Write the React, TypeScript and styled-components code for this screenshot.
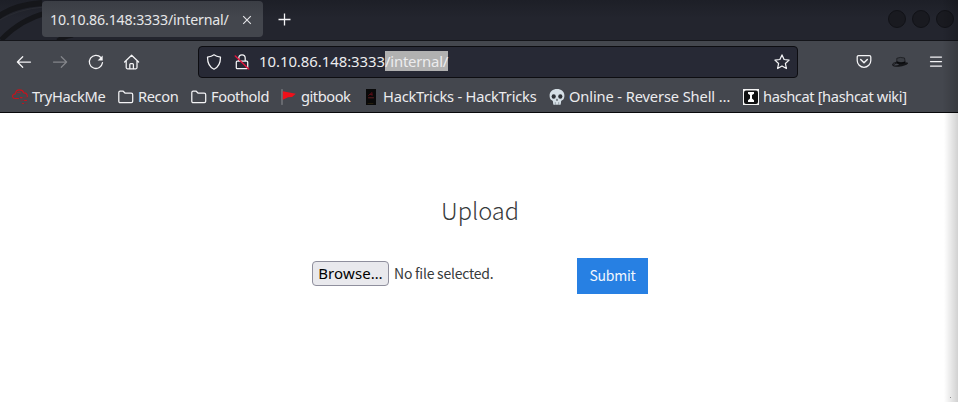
import React from "react";
import styled, { createGlobalStyle } from "styled-components";

const Global = createGlobalStyle`
  * { box-sizing: border-box; }
  body { margin: 0; background: #fff; overflow: hidden; }
`;

const Window = styled.div`
  position: relative;
  width: 958px;
  height: 402px;
  overflow: hidden;
  display: flex;
  flex-direction: column;
  background: #fff;
  font: 14.67px/20px "Noto Sans", sans-serif;
  color: #ececee;
  white-space: nowrap;
`;

const EdgeShade = styled.div<{ $dark?: boolean }>`
  position: absolute;
  right: 0;
  top: ${(p) => (p.$dark ? 0 : 113)}px;
  width: ${(p) => (p.$dark ? 16 : 14)}px;
  height: ${(p) => (p.$dark ? 113 : 289)}px;
  background: linear-gradient(90deg, transparent, rgba(0, 0, 0, 0.18));
`;

const GripDot = styled.div`
  position: absolute;
  left: 950px;
  top: 397px;
  width: 1px;
  height: 1px;
  background: #8a8a8a;
`;

const TabStrip = styled.header`
  position: relative;
  flex: none;
  height: 41px;
  display: flex;
  align-items: flex-start;
  padding: 1px 4px 0 42px;
  background: linear-gradient(#1d1f27, #23252e 45%);
  border-bottom: 1px solid #14151a;
`;

const Wallpaper = styled.svg`
  position: absolute;
  left: 0;
  top: 0;
`;

const Tab = styled.div`
  position: relative;
  width: 221px;
  height: 36px;
  display: flex;
  align-items: center;
  justify-content: space-between;
  padding: 1px 11px 0 8px;
  border-radius: 4px;
  background: linear-gradient(#3b3e45, #43464d 45%);
`;

const TabTitle = styled.span`
  font-size: 14.2px;
  letter-spacing: -0.16px;
  color: #e6e6e8;
`;

const NewTab = styled.div`
  display: flex;
  margin: 12px 0 0 15px;
`;

const WindowButtons = styled.div`
  display: flex;
  gap: 6px;
  margin: 9px 0 0 auto;
`;

const WindowButton = styled.i`
  width: 18px;
  height: 18px;
  border-radius: 50%;
  background: #191a20;
  border: 1px solid #111217;
`;

const NavBar = styled.nav`
  flex: none;
  height: 40px;
  display: flex;
  align-items: center;
  padding: 1px 14px 0 16px;
  background: #44474e;
`;

const NavButtons = styled.div`
  width: 182px;
  display: flex;
  gap: 20px;
`;

const AddressBar = styled.div`
  width: 600px;
  height: 32px;
  display: flex;
  align-items: center;
  padding: 0 7px;
  border: 1px solid #0d0d11;
  border-radius: 4px;
  background: #272935;
`;

const SecurityIcons = styled.div`
  display: flex;
  gap: 12px;
  width: 53px;
`;

const Url = styled.span`
  flex: 1;
  display: flex;
  margin-top: -2px;
  font-size: 14.9px;
  letter-spacing: -0.04px;
`;

const Selection = styled.span`
  background: #b1b1b1;
  letter-spacing: -0.24px;
`;

const Tools = styled.div`
  display: flex;
  gap: 20px;
  margin-left: auto;
`;

const Bookmarks = styled.div`
  flex: none;
  height: 32px;
  display: flex;
  padding: 5px 0 0 12px;
  background: #44474e;
  border-bottom: 1px solid #08080b;
`;

const Bookmark = styled.div<{ $w: number; $tracking: number }>`
  flex: none;
  width: ${(p) => p.$w}px;
  display: flex;
  gap: 4px;
  letter-spacing: ${(p) => p.$tracking}px;
  svg { flex: none; margin-top: 3px; }
`;

const Page = styled.main`
  display: flex;
  flex-direction: column;
  align-items: center;
  padding-top: 77px;
  font-family: "Noto Sans CJK JP", sans-serif;
  color: #373a3c;
`;

const Title = styled.h1`
  margin: 0;
  padding-left: 2px;
  height: 40px;
  font-size: 23.6px;
  font-weight: 300;
  line-height: 40px;
`;

const UploadForm = styled.form`
  display: flex;
  align-items: flex-start;
  width: 336px;
  margin: 28px 0 0 2px;
`;

const Browse = styled.button`
  width: 77px;
  height: 25px;
  margin-top: 3px;
  padding: 0;
  border: 1px solid #8f8f9d;
  border-radius: 4px;
  background: #e9e9ed;
  color: #000;
  font: 15px/21px "Noto Sans", sans-serif;
  letter-spacing: 0.12px;
`;

const FileName = styled.span`
  margin: 5px 0 0 5px;
  font-size: 14px;
  letter-spacing: -0.24px;
  line-height: 20px;
`;

const Submit = styled.button`
  width: 71px;
  height: 36px;
  margin-left: auto;
  padding: 0 0 2px;
  border: 0;
  background: #2780e3;
  color: #f2f7fd;
  font: 14px/34px "Noto Sans CJK JP", sans-serif;
  letter-spacing: -0.25px;
`;

const Icon = ({ children, dim }: { children: React.ReactNode; dim?: boolean }) => (
  <svg width="16" height="16" viewBox="0 0 16 16" fill="none" stroke={dim ? "#83858a" : "#f4f4f6"} strokeWidth="1.25" strokeLinecap="round" strokeLinejoin="round">
    {children}
  </svg>
);

const Folder = () => (
  <Icon><path d="M.8 12.2V3.6q0-1.4 1.4-1.4h3l2 2h6q1.5 0 1.5 1.5v6.5q0 1.4-1.4 1.4H2.2Q.8 13.6.8 12.2Z" /></Icon>
);

const CloudIcon = () => (
  <Icon>
    <g stroke="#c4141d" strokeWidth="1.2">
      <path d="M6.5 9.5H3Q.5 9.2.5 7.2q0-2 2.8-2.4Q4 .9 7.5.9t4.300 3Q15.300 4 15.300 7.500" />
      <path d="M5.500 3.500q1.500-1 3 .2" strokeWidth=".8" />
      <path d="M8.500 8.600h1.500M10.500 14.500h1m1-3h2" />
      <path d="M12 8.800h3m-6 2.700h2m3 3h1" stroke="#6b343b" />
    </g>
  </Icon>
);

const FlagIcon = () => (
  <Icon>
    <path d="M1 .5v15" stroke="#8c8e92" strokeWidth="1" />
    <path d="M1.800 2.200 14.800 4.800 11 8l-4 .2-5.200 2.500Z" fill="#f0101a" stroke="none" />
  </Icon>
);

const BookIcon = () => (
  <Icon>
    <path d="M3 0h10v16H3Z" fill="#090909" stroke="none" />
    <path d="m5.500 6.500 3.500-3v3M6.500 5.500h2.500" stroke="#5c0d16" strokeWidth=".9" />
    <path d="M5.500 8.800h5" stroke="#6b2023" strokeWidth=".9" />
    <path d="M5 14.500h5" stroke="#30270f" strokeWidth=".7" />
  </Icon>
);

const SkullIcon = () => (
  <Icon>
    <path d="M8 0C3.800 0 .6 2.500.6 6.300c0 2.100.4 3.200 1.100 4.200.6.8 2 .9 2.200 1.800l.4 3.100q1 .8 2.100.2.8.5 1.600 0 .9.5 1.700 0 1 .5 2-.2l.4-3.100c.2-.9 1.600-1 2.200-1.800.7-1 1.100-2.100 1.100-4.200C15.400 2.500 12.200 0 8 0Z" fill="#d5dfe6" stroke="none" />
    <ellipse cx="4.700" cy="7.500" rx="2.100" ry="2.300" fill="#2e3238" stroke="none" />
    <ellipse cx="11.300" cy="7.500" rx="2.100" ry="2.300" fill="#2e3238" stroke="none" />
    <path d="m8 9.500-1 2h2Z" fill="#2e3238" stroke="none" />
    <path d="M6.300 13.500v1.700m3.400-1.700v1.700" stroke="#7e878e" strokeWidth=".7" />
  </Icon>
);

const HashcatIcon = () => (
  <Icon>
    <path d="M0 0h16v16H0Z" fill="#f4f4f4" stroke="none" />
    <rect x="1" y="1.500" width="14" height="13.500" rx="2" fill="#101112" stroke="none" />
    <path d="M5 3h6v1.700L9 6v3.500l2 1.800V13H5v-1.700l2-1.800V6L5 4.700Z" fill="#fff" stroke="none" />
  </Icon>
);

const bookmarks: [string, number, number, React.FC][] = [
  ["TryHackMe", 106, -0.35, CloudIcon],
  ["Recon", 73, -0.4, Folder],
  ["Foothold", 90, -0.42, Folder],
  ["gitbook", 82, -0.46, FlagIcon],
  ["HackTricks - HackTricks", 186, -0.22, BookIcon],
  ["Online - Reverse Shell …", 194, -0.12, SkullIcon],
  ["hashcat [hashcat wiki]", 170, -0.38, HashcatIcon],
];

export default function App() {
  return (
    <Window>
      <Global />
      <TabStrip>
        <Wallpaper width="80" height="40" fill="none" stroke="#15161a">
          <path d="M-2 17Q14 5 42 3" strokeWidth="6" />
          <path d="M1 40Q20 20 46 13M58 41q6-5 15-6" strokeWidth="5" />
          <path d="M-2 21Q18 9 44 7" stroke="#292b32" strokeWidth="1" />
        </Wallpaper>
        <Tab>
          <TabTitle>10.10.86.148:3333/internal/</TabTitle>
          <svg width="10" height="10" viewBox="0 0 10 10" stroke="#e5e5e8" strokeWidth="1.1"><path d="m1.200 1.200 7.600 7.600m0-7.600L1.200 8.800" /></svg>
        </Tab>
        <NewTab>
          <svg width="13" height="13" viewBox="0 0 13 13" stroke="#f4f4f6" strokeWidth="1.3"><path d="M6.500.5v12M.5 6.500h12" /></svg>
        </NewTab>
        <WindowButtons><WindowButton /><WindowButton /><WindowButton /></WindowButtons>
      </TabStrip>
      <NavBar>
        <NavButtons>
          <Icon><path d="M14.500 8H1.500M6.700 2.700 1.400 8l5.300 5.300" /></Icon>
          <Icon dim><path d="M1.500 8h13M9.300 2.700 14.600 8l-5.300 5.300" /></Icon>
          <Icon>
            <path d="M12.900 3.500A6.600 6.600 0 1 0 14.500 8.700" />
            <path d="M14.700 1.400v5.100H9.600Z" fill="#f4f4f6" stroke="none" />
          </Icon>
          <Icon>
            <path d="M.6 8 7.600 1.200 14.600 8M2.200 7v6.600q0 1.200 1.200 1.200h8.400q1.200 0 1.200-1.200V7" />
            <path d="M5.800 14.500v-4q0-.9.9-.9h1.800q.9 0 .9.9v4" />
          </Icon>
        </NavButtons>
        <AddressBar>
          <SecurityIcons>
            <Icon><path d="M8 .8c2 1.500 4 2 6.500 2.400 0 5.400-1.600 9.700-6.500 12C3.100 12.900 1.500 8.600 1.500 3.200 4 2.800 6 2.300 8 .8Z" /></Icon>
            <Icon>
              <path d="M4.800 7V4a3.200 3.200 0 0 1 6.400 0v3M3.300 7h9.400q1 0 1 1v5.700q0 1-1 1H3.300q-1 0-1-1V8q0-1 1-1Z" />
              <path d="m1.300 2 13.400 13" stroke="#e2143d" strokeWidth="1.5" />
            </Icon>
          </SecurityIcons>
          <Url>10.10.86.148:3333<Selection>/internal/</Selection></Url>
          <Icon><path d="m8 .9 2.100 4.600 5 .6-3.700 3.400 1 5L8 12l-4.400 2.500 1-5L.9 6.100l5-.6Z" /></Icon>
        </AddressBar>
        <Tools>
          <Icon>
            <path d="M2.600 1.700h10.800q1.400 0 1.400 1.400v3.400a6.800 6.800 0 0 1-13.600 0V3.100q0-1.400 1.400-1.400Z" />
            <path d="m4.700 5.500 3.300 3.200 3.300-3.200" strokeWidth="1.5" />
          </Icon>
          <Icon>
            <path d="M.5 11c-.5-1.800 2-2.400 4-2.600" stroke="#16171b" strokeWidth="1" />
            <path d="M.5 11.200Q4 8.300 5 8.500q4 1.500 8.300-.3 4-.1 2.400 1.600c-2.700 2.600-8.500 3-11.700 3q-2.800 0-3.500-1.600Z" fill="#151619" stroke="none" />
            <path d="M1.600 11.300q1.200-1.500 3.200-1.900l2.400 1.200q-2.500 1.300-5.600.7Z" fill="#44474e" stroke="none" />
            <path d="M4.800 7.800V4.300Q8 2.700 12.500 4l.7 4q-3.900 1.700-8.400-.2Z" fill="#3b3e44" stroke="#191a1e" strokeWidth=".8" />
            <path d="M4.900 7.500q4.200 1.800 8.100 0v1.400q-4.100 1.500-8.100 0Z" fill="#08090b" stroke="none" />
          </Icon>
          <Icon><path d="M2.500 3h11M2.500 7.500h11M2.500 12h11" /></Icon>
        </Tools>
      </NavBar>
      <Bookmarks>
        {bookmarks.map(([label, width, tracking, Mark]) => (
          <Bookmark key={label} $w={width} $tracking={tracking}><Mark /><span>{label}</span></Bookmark>
        ))}
      </Bookmarks>
      <Page>
        <Title>Upload</Title>
        <UploadForm>
          <Browse type="button">Browse…</Browse>
          <FileName>No file selected.</FileName>
          <Submit type="button">Submit</Submit>
        </UploadForm>
      </Page>
      <EdgeShade $dark />
      <EdgeShade />
      <GripDot />
    </Window>
  );
}
